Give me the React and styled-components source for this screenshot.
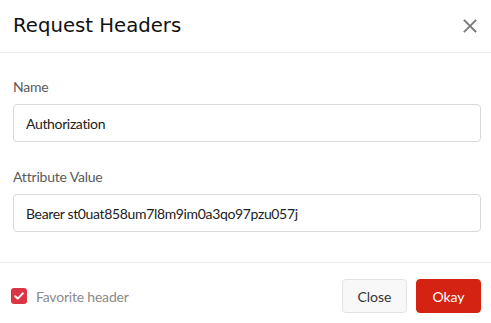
import React, { useState } from "react";
import styled, { createGlobalStyle } from "styled-components";

const GlobalStyle = createGlobalStyle`
  html, body {
    margin: 0;
    padding: 0;
    background: #fff;
  }
  body {
    font-family: Lato, "Open Sans", sans-serif;
  }
  * {
    box-sizing: border-box;
  }
`;

const Modal = styled.div`
  width: 491px;
  height: 323px;
  background: #fff;
  display: flex;
  flex-direction: column;
  overflow: hidden;
`;

const Header = styled.div`
  height: 53px;
  flex-shrink: 0;
  display: flex;
  align-items: center;
  justify-content: space-between;
  padding: 0 12px 1px 13px;
  border-bottom: 1px solid #e9ecef;
`;

const Title = styled.h5`
  margin: 0;
  font-family: "DejaVu Sans", Verdana, sans-serif;
  font-size: 19.7px;
  font-weight: 400;
  color: #111;
  line-height: 24px;
`;

const CloseX = styled.button`
  border: 0;
  background: none;
  padding: 0;
  width: 18px;
  height: 18px;
  display: flex;
  align-items: center;
  justify-content: center;
  cursor: pointer;
`;

const Body = styled.div`
  padding: 24px 10px 30px 13px;
  display: flex;
  flex-direction: column;
  gap: 25px;
  border-bottom: 1px solid #e9ecef;
`;

const Group = styled.div`
  display: flex;
  flex-direction: column;
`;

const Label = styled.label`
  font-size: 14px;
  line-height: 20px;
  color: #5a5a5a;
  margin-bottom: 7px;
  letter-spacing: -0.2px;
`;

const Input = styled.input`
  height: 38px;
  width: 100%;
  border: 1px solid #d9d9d9;
  border-radius: 4px;
  padding: 0 12px;
  font-family: Lato, "Open Sans", sans-serif;
  font-size: 14px;
  letter-spacing: -0.35px;
  color: #222;
  outline: none;
`;

const Footer = styled.div`
  display: flex;
  align-items: center;
  justify-content: space-between;
  padding: 16px 10px 0 11px;
`;

const Check = styled.label`
  display: flex;
  align-items: center;
  gap: 9px;
  font-size: 14px;
  letter-spacing: -0.2px;
  color: #8a8a8a;
  cursor: pointer;
`;

const Box = styled.span`
  width: 16px;
  height: 16px;
  border-radius: 3px;
  background: ${(p) => (p.checked ? "#dc3545" : "#fff")};
  border: ${(p) => (p.checked ? "none" : "1px solid #ccc")};
  display: flex;
  align-items: center;
  justify-content: center;
`;

const Actions = styled.div`
  display: flex;
  gap: 9px;
`;

const Button = styled.button`
  height: 34px;
  min-width: 65px;
  padding: 0 14px;
  border-radius: 4px;
  font-family: Lato, "Open Sans", sans-serif;
  font-size: 14px;
  cursor: pointer;
  border: 1px solid ${(p) => (p.primary ? "#d42213" : "#e3e3e3")};
  background: ${(p) => (p.primary ? "#d42213" : "#f8f8f8")};
  color: ${(p) => (p.primary ? "#fff" : "#333")};
`;

export default function App() {
  const [fav, setFav] = useState(true);
  const [name, setName] = useState("Authorization");
  const [value, setValue] = useState("Bearer st0uat858um7l8m9im0a3qo97pzu057j");

  return (
    <>
      <GlobalStyle />
      <Modal>
        <Header>
          <Title>Request Headers</Title>
          <CloseX aria-label="Close">
            <svg width="14" height="14" viewBox="0 0 14 14">
              <path d="M1.5 1.5L12.5 12.5M12.5 1.5L1.5 12.5" stroke="#7a7a7a" strokeWidth="1.8" strokeLinecap="square" />
            </svg>
          </CloseX>
        </Header>
        <Body>
          <Group>
            <Label>Name</Label>
            <Input value={name} onChange={(e) => setName(e.target.value)} />
          </Group>
          <Group>
            <Label>Attribute Value</Label>
            <Input value={value} onChange={(e) => setValue(e.target.value)} />
          </Group>
        </Body>
        <Footer>
          <Check onClick={() => setFav(!fav)}>
            <Box checked={fav}>
              {fav && (
                <svg width="10" height="8" viewBox="0 0 10 8">
                  <path d="M1.2 4.2L3.8 6.6L8.8 1.4" stroke="#fff" strokeWidth="2" fill="none" strokeLinecap="round" strokeLinejoin="round" />
                </svg>
              )}
            </Box>
            Favorite header
          </Check>
          <Actions>
            <Button>Close</Button>
            <Button primary>Okay</Button>
          </Actions>
        </Footer>
      </Modal>
    </>
  );
}
